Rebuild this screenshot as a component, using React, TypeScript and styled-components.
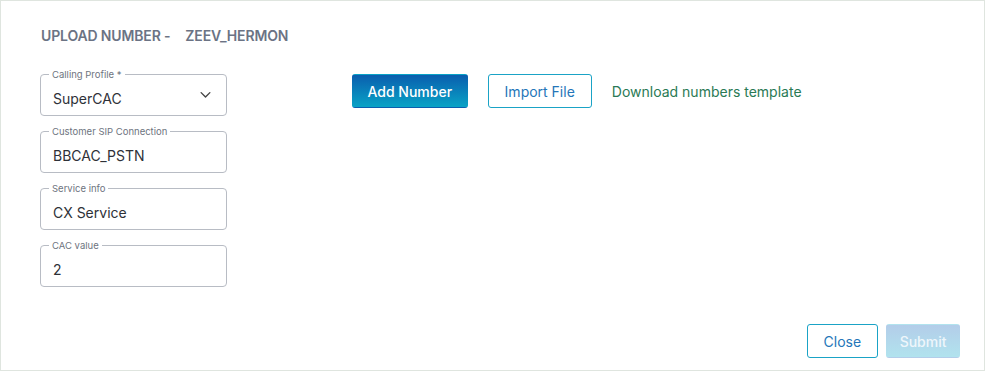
import styled, { createGlobalStyle } from "styled-components";

const GlobalStyle = createGlobalStyle`
  html, body {
    margin: 0;
    padding: 0;
    background: #ffffff;
  }
  body {
    font-family: Inter, "Noto Sans", sans-serif;
  }
`;

const Panel = styled.div`
  box-sizing: border-box;
  width: 985px;
  height: 371px;
  border: 1px solid #dfe5df;
  background: #ffffff;
  padding: 26px 24px 12px 39px;
  display: flex;
  flex-direction: column;
`;

const Title = styled.h2`
  margin: 0 0 0 1px;
  font-size: 14px;
  font-weight: 600;
  color: #6b7384;
  letter-spacing: -0.15px;
  display: flex;
  gap: 15px;
  line-height: 17px;
`;

const Body = styled.div`
  display: flex;
  align-items: flex-start;
  margin-top: 30px;
  flex: 1;
`;

const Fields = styled.div`
  display: flex;
  flex-direction: column;
  gap: 15px;
  width: 187px;
`;

const Field = styled.div`
  position: relative;
  box-sizing: border-box;
  height: 42px;
  border: 1px solid #b8bcc4;
  border-radius: 4px;
  padding: 6px 12px 0 12px;
  display: flex;
  align-items: center;
  justify-content: space-between;
`;

const Label = styled.span`
  position: absolute;
  top: -6px;
  left: 8px;
  font-size: 9.5px;
  color: #6e7480;
  padding: 0 3px;
  line-height: 11px;
  background: #ffffff;
`;

const Value = styled.span`
  font-size: 14px;
  color: #2e3138;
`;

const Chevron = styled.svg`
  width: 15px;
  height: 15px;
  margin-top: -8px;
  margin-right: 1px;
`;

const Actions = styled.div`
  display: flex;
  align-items: center;
  gap: 20px;
  margin-left: 125px;
  height: 34px;
`;

const Button = styled.button<{ $variant: "primary" | "outline" | "disabled"; $pad?: number }>`
  box-sizing: border-box;
  height: 34px;
  padding: 0 ${(p) => p.$pad ?? 14}px;
  border-radius: 3px;
  font-family: Inter, "Noto Sans", sans-serif;
  font-size: 14px;
  font-weight: ${(p) => (p.$variant === "outline" ? 400 : 500)};
  cursor: pointer;
  border: 1px solid
    ${(p) => (p.$variant === "outline" ? "#1aa3c6" : "transparent")};
  color: ${(p) =>
    p.$variant === "outline"
      ? "#2576b9"
      : p.$variant === "disabled"
        ? "#eef6fb"
        : "#ffffff"};
  background: ${(p) =>
    p.$variant === "primary"
      ? "linear-gradient(180deg, #0a5eae 0%, #09a3c6 100%)"
      : p.$variant === "disabled"
        ? "linear-gradient(180deg, #b3cde9 0%, #b1e3ee 100%)"
        : "#ffffff"};
`;

const Link = styled.a`
  font-size: 14px;
  color: #2a7a55;
  text-decoration: none;
`;

const Footer = styled.div`
  display: flex;
  justify-content: flex-end;
  gap: 8px;
`;

function App() {
  return (
    <>
      <GlobalStyle />
      <Panel>
        <Title>
          <span>UPLOAD NUMBER -</span>
          <span>ZEEV_HERMON</span>
        </Title>
        <Body>
          <Fields>
            <Field>
              <Label>Calling Profile *</Label>
              <Value>SuperCAC</Value>
              <Chevron viewBox="0 0 24 24" fill="none" stroke="#444" strokeWidth="2.2" strokeLinecap="round" strokeLinejoin="round">
                <path d="M5 9l7 7 7-7" />
              </Chevron>
            </Field>
            <Field>
              <Label>Customer SIP Connection</Label>
              <Value>BBCAC_PSTN</Value>
            </Field>
            <Field>
              <Label>Service info</Label>
              <Value>CX Service</Value>
            </Field>
            <Field>
              <Label>CAC value</Label>
              <Value>2</Value>
            </Field>
          </Fields>
          <Actions>
            <Button $variant="primary" $pad={14.5}>Add Number</Button>
            <Button $variant="outline" $pad={16}>Import File</Button>
            <Link href="#">Download numbers template</Link>
          </Actions>
        </Body>
        <Footer>
          <Button $variant="outline" $pad={16}>Close</Button>
          <Button $variant="disabled" $pad={12.5}>Submit</Button>
        </Footer>
      </Panel>
    </>
  );
}

export default App;
